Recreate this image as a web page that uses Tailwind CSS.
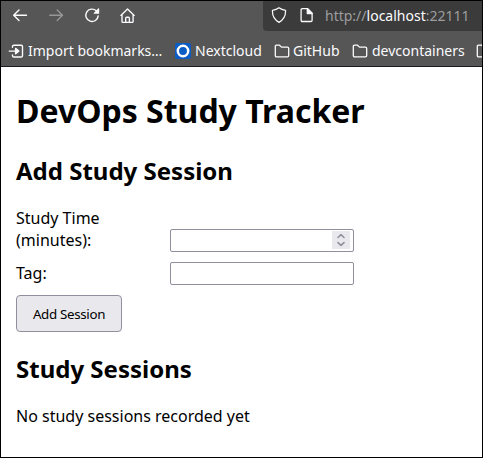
<!DOCTYPE html>
<html lang="en">
<head>
<meta charset="utf-8">
<title>DevOps Study Tracker</title>
<script src="https://cdn.jsdelivr.net/npm/@tailwindcss/browser@4"></script>
</head>
<body class="h-[458px] w-[483px] overflow-hidden border border-black bg-white font-['Noto_Sans',sans-serif] text-black">
<header class="h-[66px] overflow-hidden border-b border-[#1c1a20] bg-[#565656] text-[#fbfbfe]">
  <nav class="flex h-[30px]">
    <div class="flex w-[262px] items-start gap-5 pt-[6px] pl-[11px]">
      <svg class="h-4 w-4 shrink-0" viewBox="0 0 16 16" fill="none" stroke="currentColor" stroke-width="1.4" stroke-linecap="round" stroke-linejoin="round"><path d="M14.5 8.3H1.8M7 3 1.7 8.3 7 13.6"/></svg>
      <svg class="h-4 w-4 shrink-0 text-[#979798]" viewBox="0 0 16 16" fill="none" stroke="currentColor" stroke-width="1.4" stroke-linecap="round" stroke-linejoin="round"><path d="M1.7 8.3h12.7M9.2 3l5.3 5.3-5.3 5.3"/></svg>
      <svg class="h-4 w-4 shrink-0" viewBox="0 0 16 16" fill="none" stroke="currentColor" stroke-width="1.4" stroke-linecap="round"><path d="M14.2 8.9a6.2 6.2 0 1 1-2-5.2l.9.9"/><path d="M15.2 1.7v4.6a.5.5 0 0 1-.5.5h-4.500c-.5 0-.7-.5-.4-.8l4.600-4.700c.3-.3.8-.1.8.4Z" fill="currentColor" stroke="none"/></svg>
      <svg class="h-4 w-4 shrink-0" viewBox="0 0 16 16" fill="none" stroke="currentColor" stroke-width="1.35" stroke-linecap="round" stroke-linejoin="round"><path d="M.9 8.400 7.500 2l6.700 6.400M2 7.500v6.900q0 1 1 1h9.100q1 0 1-1V7.500M5.700 15.200v-4q0-1 1-1h1.700q1 0 1 1v4"/></svg>
    </div>
    <div class="flex flex-1 items-start rounded-bl-[4px] bg-[#3b3b3b] pl-[8px]">
      <svg class="mt-[6px] h-4 w-4 shrink-0" viewBox="0 0 16 16" fill="none" stroke="currentColor" stroke-width="1.25" stroke-linejoin="round"><path d="M8 .8c2 1.5 4.200 2.200 6.500 2.500.4 5-1.500 9.200-6.500 12.100C3 12.500 1.100 8.300 1.500 3.300 3.800 3 6 2.300 8 .8Z"/></svg>
      <svg class="mt-[6px] ml-[12px] h-4 w-4 shrink-0" viewBox="0 0 16 16" fill="none" stroke="currentColor" stroke-width="1.3" stroke-linejoin="round"><path d="M3.400 1.700h5.300l4.400 4.400v7.100q0 1.300-1.300 1.300H3.400q-1.300 0-1.300-1.300V3q0-1.300 1.300-1.300Z"/><path d="M8.300 1.700v4.800h4.800Z" fill="currentColor"/></svg>
      <p class="mt-[5px] ml-[10px] text-sm leading-5 whitespace-nowrap text-[#9d9d9f]">http://<span class="text-[#fbfbfe]">localhost</span>:22111</p>
    </div>
  </nav>
  <div class="flex h-[35px] items-start pt-[10px] pl-[7px] text-sm leading-5 whitespace-nowrap">
    <svg class="mt-[2px] h-4 w-4 shrink-0" viewBox="0 0 16 16" fill="none" stroke="currentColor" stroke-width="1.4" stroke-linecap="round" stroke-linejoin="round"><path d="M4.500 4.300V3.500q0-1.300 1.300-1.300h7.400q1.300 0 1.300 1.300v9.200q0 1.300-1.300 1.300H5.800q-1.300 0-1.300-1.300v-.8M1.200 8.100h8"/><path d="m7.600 5.400 3.200 2.700-3.200 2.700Z" fill="currentColor"/></svg>
    <span class="ml-[4px] w-[140px] shrink-0">Import bookmarks…</span>
    <svg class="mt-[2px] ml-[7px] h-4 w-4 shrink-0" viewBox="0 0 16 16"><rect width="16" height="16" rx="2.200" fill="#0b5cc4"/><circle cx="8" cy="8" r="5.200" fill="none" stroke="#fff" stroke-width="2.500"/></svg>
    <span class="ml-[4px] w-[79px] shrink-0">Nextcloud</span>
    <svg class="mt-[2px] h-4 w-4 shrink-0" viewBox="0 0 16 16" fill="none" stroke="currentColor" stroke-width="1.300" stroke-linejoin="round"><path d="M1.300 3.500q0-1.300 1.300-1.300h2.900l2 1.900h5.900q1.300 0 1.300 1.300v7.100q0 1.300-1.300 1.300H2.600q-1.300 0-1.300-1.300Z"/></svg>
    <span class="ml-[3px] w-[59px] shrink-0">GitHub</span>
    <svg class="mt-[2px] h-4 w-4 shrink-0" viewBox="0 0 16 16" fill="none" stroke="currentColor" stroke-width="1.300" stroke-linejoin="round"><path d="M1.300 3.500q0-1.300 1.300-1.300h2.900l2 1.900h5.900q1.300 0 1.300 1.300v7.100q0 1.300-1.300 1.300H2.600q-1.300 0-1.300-1.300Z"/></svg>
    <span class="ml-[4px] w-[104px] shrink-0">devcontainers</span>
    <svg class="mt-[2px] h-4 w-4 shrink-0" viewBox="0 0 16 16" fill="none" stroke="currentColor" stroke-width="1.300" stroke-linejoin="round"><path d="M1.300 3.500q0-1.300 1.300-1.300h2.900l2 1.900h5.900q1.300 0 1.300 1.300v7.100q0 1.300-1.300 1.300H2.600q-1.300 0-1.300-1.300Z"/></svg>
  </div>
</header>
<main class="px-[15px] pt-[22px]">
  <h1 class="text-[32px] leading-[44px] font-bold">DevOps Study Tracker</h1>
  <h2 class="mt-[21px] text-2xl leading-[33px] font-bold">Add Study Session</h2>
  <form class="mt-[20px]">
    <div class="flex items-end">
      <label for="minutes" class="w-[154px] pr-8 text-base leading-[22px]">Study Time (minutes):</label>
      <div class="relative -mb-px h-[23px] w-[184px]">
        <input id="minutes" type="text" inputmode="numeric" class="block h-[23px] w-full rounded-[2px] border border-[#8f8f9d] bg-white outline-none">
        <span class="absolute top-[2px] right-[4px] flex h-[18px] w-[18px] items-center justify-center bg-[#e9e9ed] text-[#8f8f9d]">
          <svg class="h-[18px] w-[18px]" viewBox="0 0 18 18" fill="none" stroke="currentColor" stroke-width="1.600" stroke-linecap="round" stroke-linejoin="round"><path d="m6 6.500 3-2.800 3 2.800M6 11.600l3 2.800 3-2.800"/></svg>
        </span>
      </div>
    </div>
    <div class="mt-[11px] flex items-start">
      <label for="tag" class="w-[154px] text-base leading-[22px]">Tag:</label>
      <input id="tag" type="text" class="block h-[23px] w-[184px] rounded-[2px] border border-[#8f8f9d] bg-white outline-none">
    </div>
    <button type="button" class="mt-[10px] block h-[37px] w-[106px] rounded-[4px] border border-[#8f8f9d] bg-[#e9e9ed] text-[13.333px] leading-[18px] tracking-[-0.32px] whitespace-nowrap">Add Session</button>
  </form>
  <h2 class="mt-[20px] text-2xl leading-[33px] font-bold">Study Sessions</h2>
  <p class="mt-[20px] text-base leading-[22px]">No study sessions recorded yet</p>
</main>
</body>
</html>
